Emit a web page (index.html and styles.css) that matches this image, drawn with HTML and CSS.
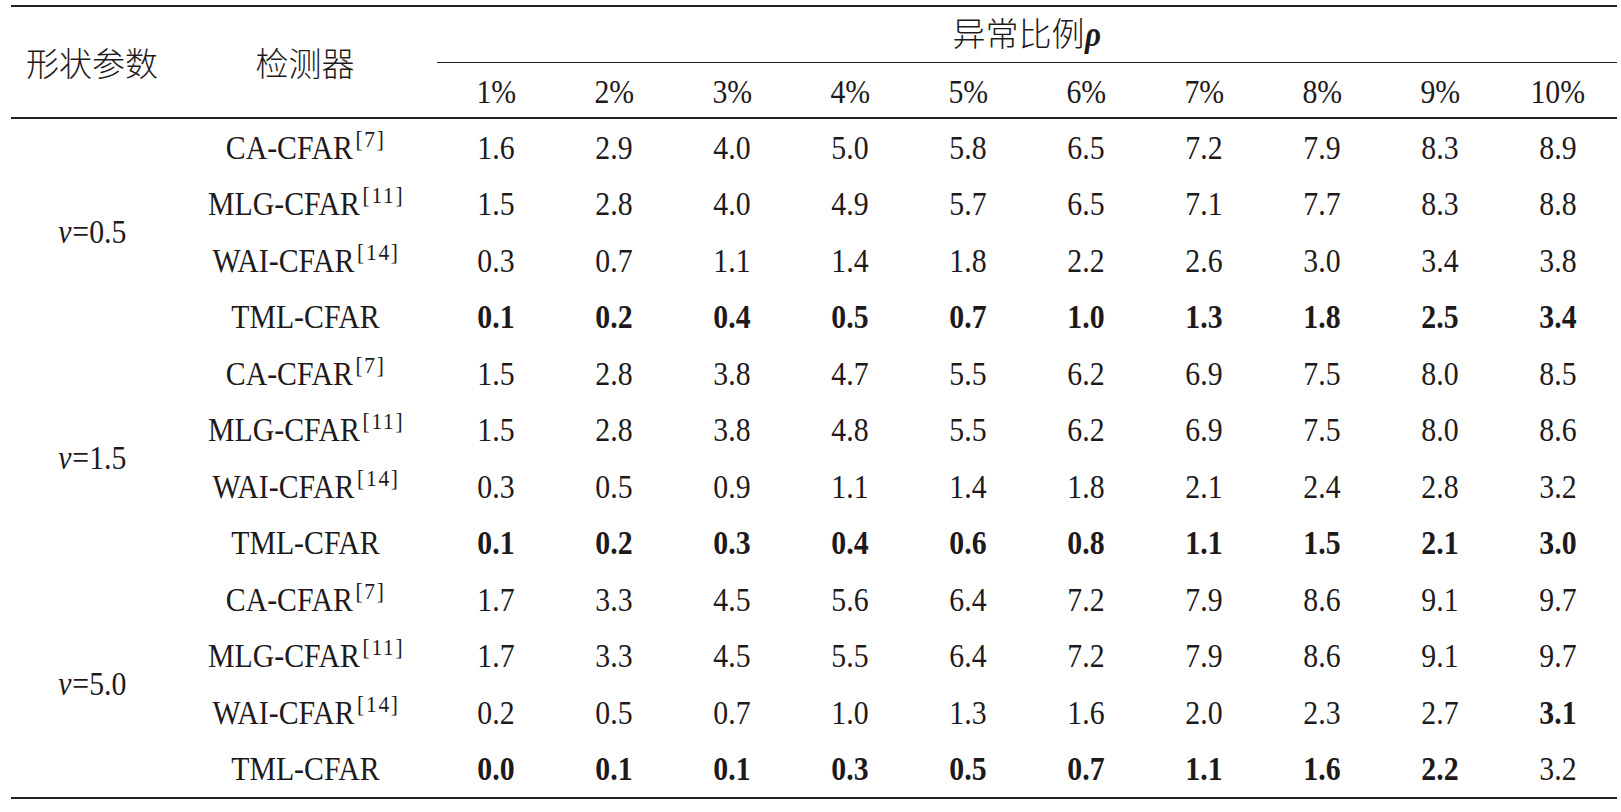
FILE: index.html
```html
<!DOCTYPE html>
<html lang="zh">
<head>
<meta charset="utf-8">
<title>表</title>
<link rel="stylesheet" href="styles.css">
</head>
<body>
<div class="wrap">
<table class="tbl">
  <colgroup>
    <col class="c-shape"><col class="c-det">
    <col class="c-num"><col class="c-num"><col class="c-num"><col class="c-num"><col class="c-num">
    <col class="c-num"><col class="c-num"><col class="c-num"><col class="c-num"><col class="c-num">
  </colgroup>
  <thead>
    <tr class="h1">
      <th rowspan="2" class="cjk top hbottom">形状参数</th>
      <th rowspan="2" class="cjk top hbottom">检测器</th>
      <th colspan="10" class="cjk top mid">异常比例<span class="s rho">ρ</span></th>
    </tr>
    <tr class="h2">
      <th class="hbottom"><span class="s">1%</span></th><th class="hbottom"><span class="s">2%</span></th><th class="hbottom"><span class="s">3%</span></th><th class="hbottom"><span class="s">4%</span></th><th class="hbottom"><span class="s">5%</span></th>
      <th class="hbottom"><span class="s">6%</span></th><th class="hbottom"><span class="s">7%</span></th><th class="hbottom"><span class="s">8%</span></th><th class="hbottom"><span class="s">9%</span></th><th class="hbottom"><span class="s">10%</span></th>
    </tr>
  </thead>
  <tbody>
    <tr>
      <td rowspan="4" class="shape"><span class="s"><i>v</i>=0.5</span></td>
      <td><span class="s">CA-CFAR<span class="ref">[7]</span></span></td>
      <td><span class="s">1.6</span></td><td><span class="s">2.9</span></td><td><span class="s">4.0</span></td><td><span class="s">5.0</span></td><td><span class="s">5.8</span></td><td><span class="s">6.5</span></td><td><span class="s">7.2</span></td><td><span class="s">7.9</span></td><td><span class="s">8.3</span></td><td><span class="s">8.9</span></td>
    </tr>
    <tr>
      <td><span class="s">MLG-CFAR<span class="ref">[11]</span></span></td>
      <td><span class="s">1.5</span></td><td><span class="s">2.8</span></td><td><span class="s">4.0</span></td><td><span class="s">4.9</span></td><td><span class="s">5.7</span></td><td><span class="s">6.5</span></td><td><span class="s">7.1</span></td><td><span class="s">7.7</span></td><td><span class="s">8.3</span></td><td><span class="s">8.8</span></td>
    </tr>
    <tr>
      <td><span class="s">WAI-CFAR<span class="ref">[14]</span></span></td>
      <td><span class="s">0.3</span></td><td><span class="s">0.7</span></td><td><span class="s">1.1</span></td><td><span class="s">1.4</span></td><td><span class="s">1.8</span></td><td><span class="s">2.2</span></td><td><span class="s">2.6</span></td><td><span class="s">3.0</span></td><td><span class="s">3.4</span></td><td><span class="s">3.8</span></td>
    </tr>
    <tr>
      <td><span class="s">TML-CFAR</span></td>
      <td class="b"><span class="s">0.1</span></td><td class="b"><span class="s">0.2</span></td><td class="b"><span class="s">0.4</span></td><td class="b"><span class="s">0.5</span></td><td class="b"><span class="s">0.7</span></td><td class="b"><span class="s">1.0</span></td><td class="b"><span class="s">1.3</span></td><td class="b"><span class="s">1.8</span></td><td class="b"><span class="s">2.5</span></td><td class="b"><span class="s">3.4</span></td>
    </tr>
    <tr>
      <td rowspan="4" class="shape"><span class="s"><i>v</i>=1.5</span></td>
      <td><span class="s">CA-CFAR<span class="ref">[7]</span></span></td>
      <td><span class="s">1.5</span></td><td><span class="s">2.8</span></td><td><span class="s">3.8</span></td><td><span class="s">4.7</span></td><td><span class="s">5.5</span></td><td><span class="s">6.2</span></td><td><span class="s">6.9</span></td><td><span class="s">7.5</span></td><td><span class="s">8.0</span></td><td><span class="s">8.5</span></td>
    </tr>
    <tr>
      <td><span class="s">MLG-CFAR<span class="ref">[11]</span></span></td>
      <td><span class="s">1.5</span></td><td><span class="s">2.8</span></td><td><span class="s">3.8</span></td><td><span class="s">4.8</span></td><td><span class="s">5.5</span></td><td><span class="s">6.2</span></td><td><span class="s">6.9</span></td><td><span class="s">7.5</span></td><td><span class="s">8.0</span></td><td><span class="s">8.6</span></td>
    </tr>
    <tr>
      <td><span class="s">WAI-CFAR<span class="ref">[14]</span></span></td>
      <td><span class="s">0.3</span></td><td><span class="s">0.5</span></td><td><span class="s">0.9</span></td><td><span class="s">1.1</span></td><td><span class="s">1.4</span></td><td><span class="s">1.8</span></td><td><span class="s">2.1</span></td><td><span class="s">2.4</span></td><td><span class="s">2.8</span></td><td><span class="s">3.2</span></td>
    </tr>
    <tr>
      <td><span class="s">TML-CFAR</span></td>
      <td class="b"><span class="s">0.1</span></td><td class="b"><span class="s">0.2</span></td><td class="b"><span class="s">0.3</span></td><td class="b"><span class="s">0.4</span></td><td class="b"><span class="s">0.6</span></td><td class="b"><span class="s">0.8</span></td><td class="b"><span class="s">1.1</span></td><td class="b"><span class="s">1.5</span></td><td class="b"><span class="s">2.1</span></td><td class="b"><span class="s">3.0</span></td>
    </tr>
    <tr>
      <td rowspan="4" class="shape last"><span class="s"><i>v</i>=5.0</span></td>
      <td><span class="s">CA-CFAR<span class="ref">[7]</span></span></td>
      <td><span class="s">1.7</span></td><td><span class="s">3.3</span></td><td><span class="s">4.5</span></td><td><span class="s">5.6</span></td><td><span class="s">6.4</span></td><td><span class="s">7.2</span></td><td><span class="s">7.9</span></td><td><span class="s">8.6</span></td><td><span class="s">9.1</span></td><td><span class="s">9.7</span></td>
    </tr>
    <tr>
      <td><span class="s">MLG-CFAR<span class="ref">[11]</span></span></td>
      <td><span class="s">1.7</span></td><td><span class="s">3.3</span></td><td><span class="s">4.5</span></td><td><span class="s">5.5</span></td><td><span class="s">6.4</span></td><td><span class="s">7.2</span></td><td><span class="s">7.9</span></td><td><span class="s">8.6</span></td><td><span class="s">9.1</span></td><td><span class="s">9.7</span></td>
    </tr>
    <tr>
      <td><span class="s">WAI-CFAR<span class="ref">[14]</span></span></td>
      <td><span class="s">0.2</span></td><td><span class="s">0.5</span></td><td><span class="s">0.7</span></td><td><span class="s">1.0</span></td><td><span class="s">1.3</span></td><td><span class="s">1.6</span></td><td><span class="s">2.0</span></td><td><span class="s">2.3</span></td><td><span class="s">2.7</span></td><td class="b"><span class="s">3.1</span></td>
    </tr>
    <tr class="last">
      <td><span class="s">TML-CFAR</span></td>
      <td class="b"><span class="s">0.0</span></td><td class="b"><span class="s">0.1</span></td><td class="b"><span class="s">0.1</span></td><td class="b"><span class="s">0.3</span></td><td class="b"><span class="s">0.5</span></td><td class="b"><span class="s">0.7</span></td><td class="b"><span class="s">1.1</span></td><td class="b"><span class="s">1.6</span></td><td class="b"><span class="s">2.2</span></td><td><span class="s">3.2</span></td>
    </tr>
  </tbody>
</table>
</div>
</body>
</html>
```
FILE: styles.css
```css
html, body {
  margin: 0;
  padding: 0;
  background: #ffffff;
}

.wrap {
  padding: 5px 0 0 11px;
}

.tbl {
  table-layout: fixed;
  border-collapse: separate;
  border-spacing: 0;
  width: 1606px;
  color: #1e1a1b;
  font-family: "Liberation Serif", "Times New Roman", serif;
  font-size: 33.5px;
}

.c-shape { width: 162px; }
.c-det { width: 264px; }
.c-num { width: 118px; }

.tbl th,
.tbl td {
  padding: 0;
  text-align: center;
  vertical-align: middle;
  font-weight: normal;
  white-space: nowrap;
  line-height: 1;
}

/* condensed Times look of the source typesetting */
.s {
  display: inline-block;
  transform: scaleX(0.89);
  transform-origin: 50% 50%;
}

.tbl th.cjk {
  font-family: "Noto Sans CJK SC", "Noto Sans CJK JP", sans-serif;
  font-weight: 300;
  font-size: 33px;
}

.top {
  border-top: 2px solid #231f20;
}

.mid {
  border-bottom: 1px solid #231f20;
}

.hbottom {
  border-bottom: 2px solid #231f20;
}

.h1 { height: 58px; }
.h1 .mid { padding-bottom: 2px; }
.h2 { height: 56px; }
.h2 th { padding-top: 3px; }

.rho {
  font-family: "Liberation Serif", "Times New Roman", serif;
  font-style: italic;
  font-weight: bold;
  font-size: 35px;
  margin-left: -1px;
}

.tbl tbody tr { height: 56.5px; }
.tbl tbody tr.last { height: 58.5px; }
.tbl tbody tr.last td,
.tbl td.shape.last {
  border-bottom: 2px solid #231f20;
}

.shape i {
  font-style: italic;
  margin-right: 1px;
}

.ref {
  font-size: 24px;
  line-height: 0;
  vertical-align: 12px;
  letter-spacing: 2px;
  margin-left: 3px;
  margin-right: -2px;
}

.tbl td.b {
  font-weight: bold;
}
```
